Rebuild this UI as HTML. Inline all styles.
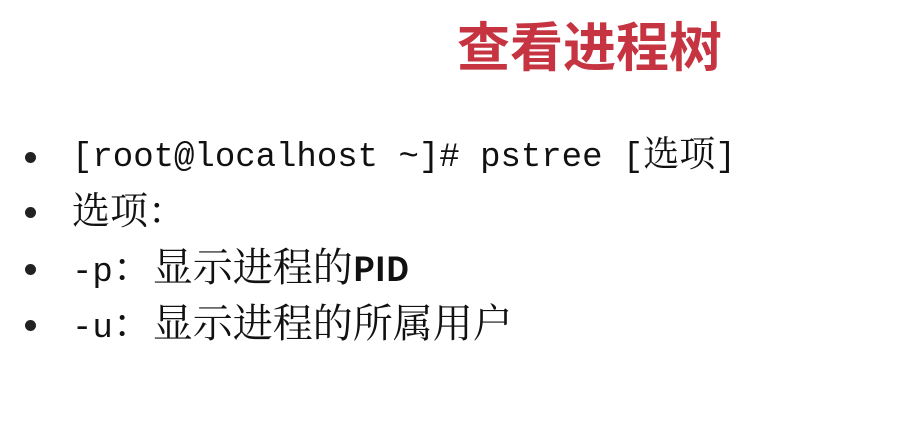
<!DOCTYPE html>
<html><head><meta charset="utf-8"><style>
body{margin:0;width:921px;height:440px;background:#fff;overflow:hidden;position:relative;font-family:"Liberation Mono","Noto Serif CJK SC",monospace;color:#111}
.t{position:absolute;left:457px;top:6px;font:bold 53px "Noto Sans CJK SC",sans-serif;color:#c53440}
.l{position:absolute;left:72px;font-size:34px;line-height:40px;white-space:nowrap}
.c{font-family:"Noto Serif CJK SC",serif;font-size:40px}
.b{position:absolute;left:25px;width:11px;height:11px;border-radius:50%;background:#222}
.s{font-family:"Noto Sans CJK SC",sans-serif;font-weight:bold;font-size:33px}
</style></head><body>
<div class="t">查看进程树</div>
<div class="b" style="top:152px"></div><div class="l" style="top:132px">[root@localhost ~]# pstree [<span class="c" style="font-size:36px">选项</span>]</div>
<div class="b" style="top:207px"></div><div class="l" style="top:188px"><span class="c" style="font-size:38px">选项：</span></div>
<div class="b" style="top:264px"></div><div class="l" style="top:245px">-p<span class="c">：显示进程的</span><span class="s">PID</span></div>
<div class="b" style="top:320px"></div><div class="l" style="top:301px">-u<span class="c">：显示进程的所属用户</span></div>
</body></html>
